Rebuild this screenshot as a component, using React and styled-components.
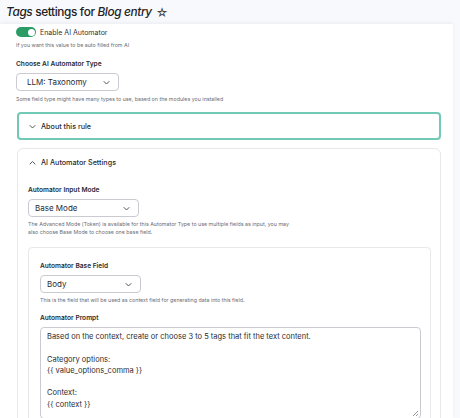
import React from 'react';
import styled, { createGlobalStyle } from 'styled-components';

const GlobalStyle = createGlobalStyle`
  html, body {
    margin: 0;
    padding: 0;
    background: #f8f9fc;
    font-family: Inter, "Noto Sans", sans-serif;
    color: #232429;
  }
`;

const Page = styled.div`
  width: 460px;
  height: 418px;
  overflow: hidden;
  background: #f8f9fc;
`;

const TitleBar = styled.div`
  height: 24px;
  display: flex;
  align-items: center;
  padding-left: 6px;
  font-size: 11.8px;
  letter-spacing: -0.35px;
  color: #222;
  gap: 4px;
`;

const Title = styled.h1`
  margin: 0;
  font-size: inherit;
  font-weight: 500;
  em { font-style: italic; }
`;

const Star = styled.span`
  font-size: 12px;
  color: #444;
`;

const Panel = styled.div`
  width: 453px;
  background: #fff;
  box-shadow: 0 -1px 4px rgba(0, 0, 0, 0.06);
  padding: 3px 11px 0 16px;
  box-sizing: border-box;
  height: 394px;
`;

const ToggleRow = styled.div`
  display: flex;
  align-items: center;
  gap: 4px;
  height: 10px;
  font-size: 7px;
  color: #333;
`;

const Switch = styled.span`
  width: 20px;
  height: 10px;
  border-radius: 5px;
  background: #2a9b64;
  position: relative;
  &::after {
    content: '';
    position: absolute;
    right: 1.5px;
    top: 1.5px;
    width: 7px;
    height: 7px;
    border-radius: 50%;
    background: #fff;
  }
`;

const Help = styled.div`
  font-size: 5.3px;
  line-height: 8px;
  color: #6b6d74;
  margin-top: ${p => p.$top || 4}px;
  max-width: ${p => p.$max || 420}px;
`;

const Label = styled.div`
  font-size: 6.6px;
  font-weight: 600;
  color: #2b2c31;
  margin-top: ${p => p.$top || 0}px;
  line-height: 8px;
`;

const Select = styled.div`
  width: ${p => p.$w}px;
  height: 18px;
  margin-top: 5px;
  border: 1px solid #c9cbd1;
  border-radius: 4px;
  box-sizing: border-box;
  display: flex;
  align-items: center;
  justify-content: space-between;
  padding: 0 8px 0 ${p => p.$pl || 10}px;
  font-size: 8px;
  color: #2a2b30;
`;

const Chevron = ({ up, color = '#555' }) => (
  <svg width="7" height="5" viewBox="0 0 7 5">
    <path
      d={up ? 'M1 4 L3.5 1.5 L6 4' : 'M1 1.5 L3.5 4 L6 1.5'}
      fill="none"
      stroke={color}
      strokeWidth="1"
      strokeLinecap="round"
      strokeLinejoin="round"
    />
  </svg>
);

const Details = styled.div`
  margin-top: ${p => p.$top}px;
  margin-left: 1px;
  width: 424px;
  box-sizing: border-box;
  border: ${p => (p.$active ? '2px solid #72c9b6' : '1px solid #e7e8ec')};
  border-radius: ${p => (p.$active ? 4 : 6)}px;
  padding: ${p => (p.$active ? '0 10px' : '0 9px 0 10px')};
`;

const Summary = styled.div`
  display: flex;
  align-items: center;
  gap: 5px;
  height: ${p => p.$h}px;
  font-size: 7.2px;
  font-weight: 500;
  color: #2a2b30;
  padding-left: ${p => p.$pl || 0}px;
`;

const InnerCard = styled.div`
  margin-top: 11px;
  border: 1px solid #e7e8ec;
  border-radius: 4px;
  padding: 14px 11px 0 11px;
  height: 200px;
`;

const Prompt = styled.div`
  position: relative;
  margin-top: 5px;
  width: 381px;
  height: 92px;
  box-sizing: border-box;
  border: 1px solid #c9cbd1;
  border-radius: 4px;
  padding: 3px 6px;
  font-size: 7.5px;
  line-height: 11.3px;
  color: #2a2b30;
  white-space: pre-wrap;
  &::after {
    content: '';
    position: absolute;
    right: 2px;
    bottom: 2px;
    width: 5px;
    height: 5px;
    background: linear-gradient(135deg, transparent 45%, #999 45%, #999 55%, transparent 55%, transparent 70%, #999 70%, #999 80%, transparent 80%);
  }
`;

const promptText = `Based on the context, create or choose 3 to 5 tags that fit the text content.

Category options:
{{ value_options_comma }}

Context:
{{ context }}`;

export default function App() {
  return (
    <Page>
      <GlobalStyle />
      <TitleBar>
        <Title>
          <em>Tags</em> settings for <em>Blog entry</em>
        </Title>
        <Star>☆</Star>
      </TitleBar>
      <Panel>
        <ToggleRow>
          <Switch />
          <span>Enable AI Automator</span>
        </ToggleRow>
        <Help $top={4}>If you want this value to be auto filled from AI</Help>
        <Label $top={11}>Choose AI Automator Type</Label>
        <Select $w={103}>
          <span>LLM: Taxonomy</span>
          <Chevron />
        </Select>
        <Help $top={4}>Some field type might have many types to use, based on the modules you installed</Help>

        <Details $active $top={9}>
          <Summary $h={24}>
            <Chevron />
            About this rule
          </Summary>
        </Details>

        <Details $top={8}>
          <Summary $h={26} $pl={1}>
            <Chevron up />
            AI Automator Settings
          </Summary>
          <Label $top={11}>Automator Input Mode</Label>
          <Select $w={111} $pl={6}>
            <span>Base Mode</span>
            <Chevron />
          </Select>
          <Help $top={3} $max={272}>
            The Advanced Mode (Token) is available for this Automator Type to use multiple fields as input, you may also choose Base Mode to choose one base field.
          </Help>
          <InnerCard>
            <Label>Automator Base Field</Label>
            <Select $w={101} $pl={6}>
              <span>Body</span>
              <Chevron />
            </Select>
            <Help $top={3}>This is the field that will be used as context field for generating data into this field.</Help>
            <Label $top={10}>Automator Prompt</Label>
            <Prompt>{promptText}</Prompt>
          </InnerCard>
        </Details>
      </Panel>
    </Page>
  );
}
